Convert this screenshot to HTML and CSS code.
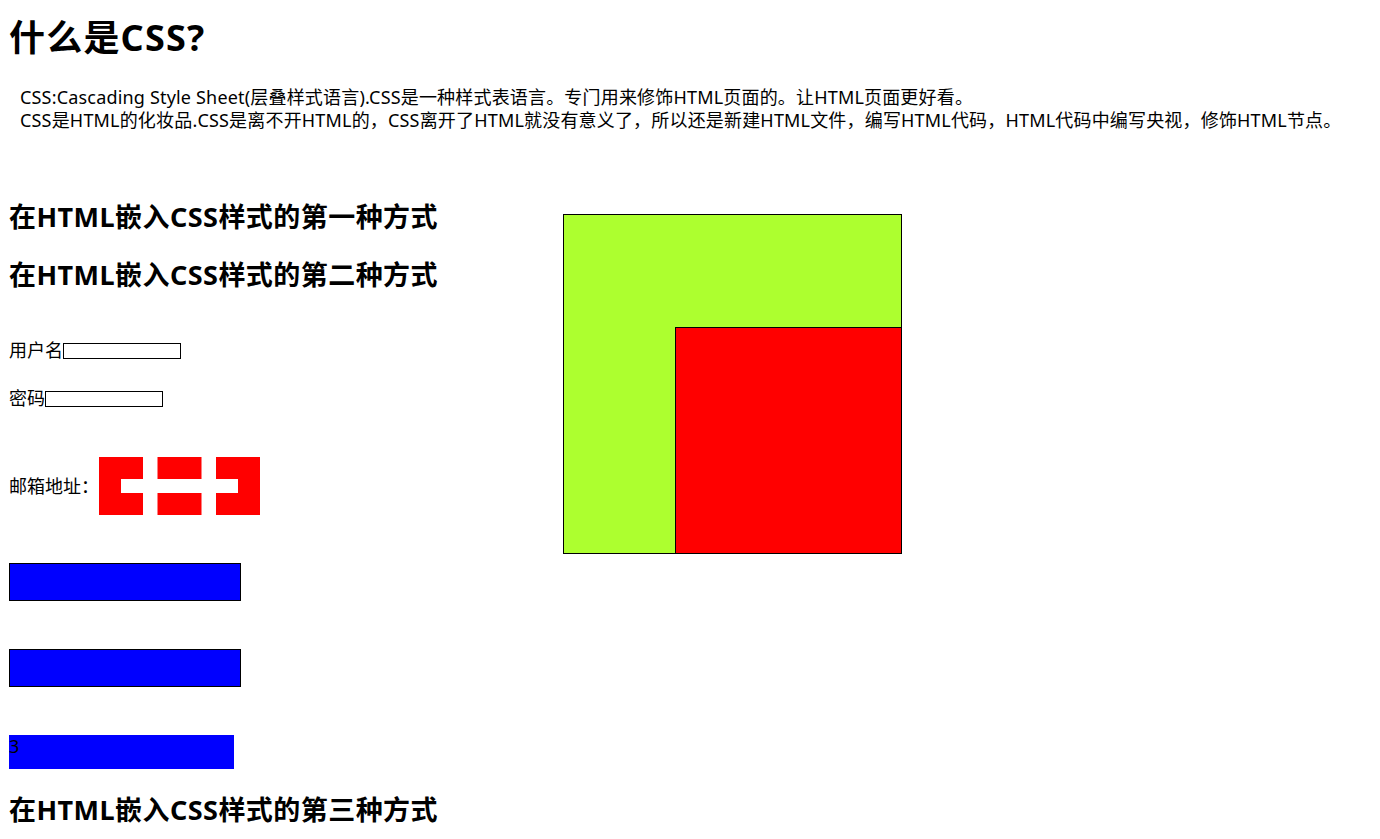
FILE: index.html
```html
<!DOCTYPE html>
<html lang="zh-CN">
<head>
<meta charset="utf-8">
<title>什么是CSS?</title>
<link rel="stylesheet" href="styles.css">
</head>
<body>
<h1 class="title">什么是CSS?</h1>
<p class="intro">CSS:Cascading Style Sheet(层叠样式语言).CSS是一种样式表语言。专门用来修饰HTML页面的。让HTML页面更好看。<br>CSS是HTML的化妆品.CSS是离不开HTML的，CSS离开了HTML就没有意义了，所以还是新建HTML文件，编写HTML代码，HTML代码中编写央视，修饰HTML节点。</p>
<div class="main">
  <div class="left">
    <h2 class="sec sec-first">在HTML嵌入CSS样式的第一种方式</h2>
    <h2 class="sec sec-second">在HTML嵌入CSS样式的第二种方式</h2>
    <div class="field field-user"><span>用户名</span><input class="txt" type="text"></div>
    <div class="field field-pwd"><span>密码</span><input class="txt" type="password"></div>
    <div class="field field-mail"><span>邮箱地址：</span><input class="mail" type="text"></div>
    <div class="blue blue-border blue-1"></div>
    <div class="blue blue-border blue-2"></div>
    <div class="blue blue-plain">3</div>
    <h2 class="sec sec-third">在HTML嵌入CSS样式的第三种方式</h2>
  </div>
  <div class="right">
    <div class="green"><div class="red"></div></div>
  </div>
</div>
</body>
</html>
```
FILE: styles.css
```css
body {
  margin: 8px 8px 8px 9px;
  font-family: "Noto Sans", "Noto Sans CJK SC", sans-serif;
  font-size: 18px;
  color: #000;
  background: #fff;
}
.title {
  margin: 6px 0 0 0;
  font-size: 36px;
  line-height: 48px;
  font-weight: bold;
  letter-spacing: 1.2px;
}
.intro {
  margin: 24px 0 0 11px;
  line-height: 23px;
  letter-spacing: 0.18px;
}
.main {
  display: flex;
  margin-top: 67px;
}
.left {
  width: 554px;
  display: flex;
  flex-direction: column;
  align-items: flex-start;
}
.sec {
  margin: 0;
  font-size: 27px;
  line-height: 36px;
  font-weight: bold;
  letter-spacing: 0.45px;
}
.sec-second { margin-top: 22px; }
.sec-third { margin-top: 23px; }
.field {
  display: flex;
  align-items: center;
  line-height: 23px;
}
.field-user { margin-top: 46px; }
.field-pwd { margin-top: 25px; }
.field-mail { margin-top: 47px; }
.txt {
  width: 116px;
  height: 14px;
  padding: 0;
  margin: 0;
  border: 1px solid #000;
  box-sizing: content-box;
}
.mail {
  width: 117px;
  height: 14px;
  padding: 0;
  margin: 0;
  border: 22px dashed #f00;
  box-sizing: content-box;
}
.blue {
  background: #00f;
  margin-top: 48px;
}
.blue-border {
  width: 230px;
  height: 36px;
  border: 1px solid #000;
}
.blue-plain {
  width: 225px;
  height: 34px;
  line-height: 23px;
}
.right {
  padding-top: 15px;
}
.green {
  position: relative;
  width: 337px;
  height: 338px;
  background: #adff2f;
  border: 1px solid #000;
}
.red {
  position: absolute;
  right: -1px;
  bottom: -1px;
  width: 225px;
  height: 225px;
  background: #f00;
  border: 1px solid #000;
}
```
